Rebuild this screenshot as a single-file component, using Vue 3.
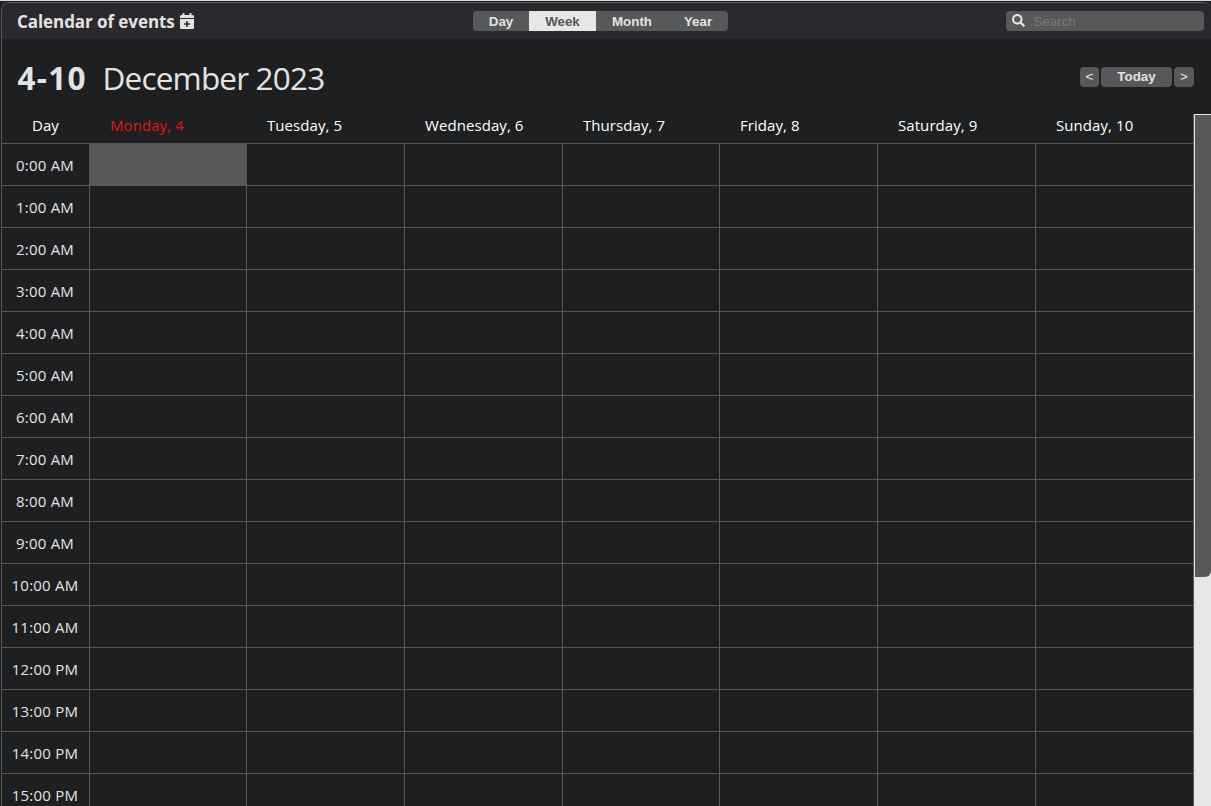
<script setup>
const days = ['Monday, 4', 'Tuesday, 5', 'Wednesday, 6', 'Thursday, 7', 'Friday, 8', 'Saturday, 9', 'Sunday, 10']
const hours = Array.from({ length: 16 }, (_, i) => `${i}:00 ${i < 12 ? 'AM' : 'PM'}`)
const views = ['Day', 'Week', 'Month', 'Year']
</script>

<template>
  <div class="page">
    <div class="window">
      <header class="bar">
        <div class="brand">
          <span class="brand-text">Calendar of events</span>
          <svg class="cal" viewBox="0 0 448 512" preserveAspectRatio="none"><path fill="currentColor" d="M96 0h32q16 0 16 16v48h160V16q0-16 16-16h32q16 0 16 16v48h32q48 0 48 48v48H0v-48q0-48 48-48h32V16Q80 0 96 0ZM0 192h448v272q0 48-48 48H48q-48 0-48-48ZM200 256v72h-72v48h72v72h48v-72h72v-48h-72v-72Z" fill-rule="evenodd"/></svg>
        </div>
        <nav class="views">
          <button v-for="v in views" :key="v" :class="['view', v.toLowerCase(), { active: v === 'Week' }]">{{ v }}</button>
        </nav>
        <div class="search">
          <svg class="lens" viewBox="0 0 512 512"><path fill="currentColor" d="M505 442.700 405.300 343c-4.500-4.500-10.600-7-17-7H372c27.600-35.300 44-79.700 44-128C416 93.100 322.900 0 208 0S0 93.100 0 208s93.100 208 208 208c48.300 0 92.700-16.400 128-44v16.300c0 6.400 2.500 12.500 7 17l99.700 99.700c9.400 9.400 24.600 9.400 33.900 0l28.300-28.300c9.400-9.400 9.400-24.600.100-34zM208 336c-70.700 0-128-57.200-128-128 0-70.700 57.200-128 128-128 70.700 0 128 57.200 128 128 0 70.700-57.200 128-128 128z"/></svg>
          <span class="hint">Search</span>
        </div>
      </header>
      <div class="title-row">
        <h1><b>4-10</b><span>December 2023</span></h1>
        <div class="nav">
          <button class="arrow">&lt;</button>
          <button class="today">Today</button>
          <button class="arrow next">&gt;</button>
        </div>
      </div>
      <main class="body">
        <div class="calendar">
          <div class="day-row">
            <div class="corner"><span>Day</span></div>
            <div v-for="(d, i) in days" :key="d" :class="['day-name', { current: i === 0 }]">{{ d }}</div>
          </div>
          <div v-for="(h, r) in hours" :key="h" class="hour-row">
            <div class="hour">{{ h }}</div>
            <div v-for="(d, c) in days" :key="d" :class="['cell', { picked: r === 0 && c === 0 }]"></div>
          </div>
        </div>
        <div class="scroll"><div class="thumb"></div></div>
      </main>
    </div>
  </div>
</template>

<style>
html, body { overflow: hidden; }
</style>

<style scoped>
* { box-sizing: border-box; }
.page {
  width: 1211px;
  height: 806px;
  padding: 2px 0 0 1px;
  overflow: hidden;
  background: linear-gradient(#d3dcd6 0 1px, #1e1f21 1px);
  font-family: "Open Sans", "Noto Sans", sans-serif;
  color: #e3e3e3;
}
.window {
  height: 804px;
  border: 1px solid #565758;
  border-width: 1px 0 0 1px;
  border-radius: 8px 8px 0 0;
  overflow: hidden;
  background: #1e1f21;
}
.bar {
  height: 36px;
  background: #2b292d;
  display: grid;
  grid-template-columns: 471px 1fr 198px;
  padding-right: 7px;
}
.brand { display: flex; padding: 6px 0 0 15px; white-space: nowrap; }
.brand-text { width: 163px; font-size: 17px; line-height: 25px; font-weight: 700; letter-spacing: -0.07px; }
.cal { width: 14px; height: 16px; margin-top: 4px; }
button { border: 0; padding: 0; color: #e3e3e3; background: #575859; font: bold 13.33px/20px "Liberation Sans", Arial, sans-serif; }
.views { display: flex; width: 255px; height: 20px; margin-top: 8px; border-radius: 4px; overflow: hidden; }
.view { line-height: 21px; }
.day { width: 56px; }
.week { width: 67px; }
.month { width: 72px; }
.year { width: 60px; }
.view.active { background: #e7e7e7; color: #575859; }
.search { display: flex; height: 20px; margin-top: 8px; border-radius: 4px; background: #575859; }
.lens { width: 13px; height: 13px; margin: 3px 0 0 6px; }
.hint { margin-left: 8.5px; font: 13.33px/21px "Liberation Sans", Arial, sans-serif; color: #777879; }
.title-row { height: 75px; display: flex; justify-content: space-between; padding: 0 17px 0 15px; }
h1 { display: flex; margin: 16px 0 0; font-size: 31.5px; line-height: 46px; font-weight: 400; white-space: nowrap; }
h1 b { width: 85.5px; padding-left: 0.5px; letter-spacing: 1.3px; }
h1 span { letter-spacing: -0.82px; }
.nav { display: flex; gap: 2px; margin-top: 28px; height: 20px; }
.nav button { border-radius: 4px; }
.nav .arrow { width: 19px; font-weight: 400; }
.nav .next { width: 20px; }
.today { width: 71px; }
.body { display: flex; height: 692px; }
.calendar { width: 1192px; overflow: hidden; border-right: 1px solid #565758; }
.day-row, .hour-row { display: grid; grid-template-columns: 88px 157px 158px 158px 157px 158px 158px 158px; }
.day-row { height: 30px; border-bottom: 1px solid #565758; color: #fff; font-size: 15px; line-height: 22px; letter-spacing: 0.07px; }
.corner { padding-right: 1px; text-align: center; }
.day-name { padding-left: 20px; }
.current { color: #e51414; }
.hour-row { height: 42px; border-bottom: 1px solid #565758; }
.hour { height: 41px; overflow: hidden; border-right: 1px solid #565758; padding-right: 1px; text-align: center; font-size: 15px; line-height: 43px; letter-spacing: 0.23px; }
.cell { border-right: 1px solid #565758; }
.cell:last-child { border-right: 0; }
.picked { background: #565758; }
.scroll { width: 17px; background: #e6e6e6; padding: 1px 0 0 1px; }
.thumb { height: 462px; background: #565758; border-radius: 0 0 6px 0; }
</style>
